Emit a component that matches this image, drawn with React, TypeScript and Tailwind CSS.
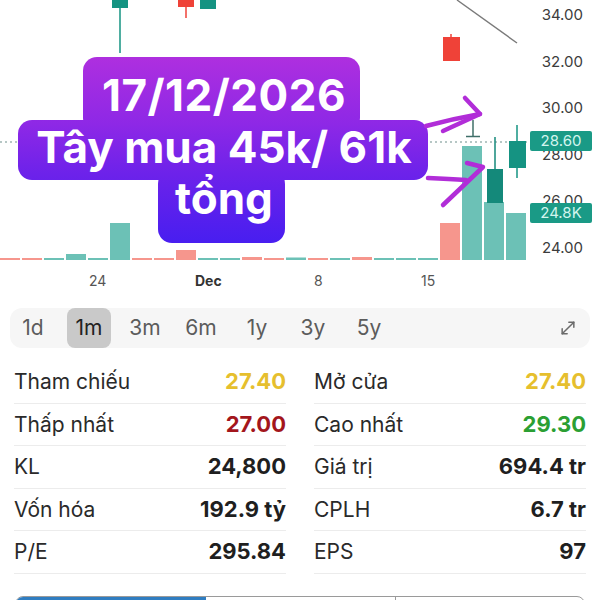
const vols: [string, number][] = [
  ["r", 2], ["r", 2], ["t", 2], ["t", 6], ["t", 2], ["t", 37], ["r", 2], ["r", 2],
  ["r", 10], ["t", 2], ["t", 2], ["r", 3], ["r", 2], ["t", 2.5], ["r", 2], ["t", 2],
  ["r", 3], ["t", 2], ["t", 2], ["t", 2], ["r", 37], ["t", 114], ["t", 58], ["t", 47],
];

const prices = ["34.00", "32.00", "30.00", "28.00", "26.00", "24.00"];
const ranges = ["1d", "1m", "3m", "6m", "1y", "3y", "5y"];

const stats = [
  ["Tham chiếu", "27.40", "text-[#e6bf2e]", "Mở cửa", "27.40", "text-[#e6bf2e]"],
  ["Thấp nhất", "27.00", "text-[#a3161c]", "Cao nhất", "29.30", "text-[#2b9f33]"],
  ["KL", "24,800", "text-[#1f1f1f]", "Giá trị", "694.4 tr", "text-[#1f1f1f]"],
  ["Vốn hóa", "192.9 tỷ", "text-[#1f1f1f]", "CPLH", "6.7 tr", "text-[#1f1f1f]"],
  ["P/E", "295.84", "text-[#1f1f1f]", "EPS", "97", "text-[#1f1f1f]"],
];

function PriceChart() {
  return (
    <svg width="530" height="265" className="block">
      {/* đường xu hướng */}
      <line x1="457" y1="0" x2="517" y2="43" stroke="#7a7a7a" strokeWidth="1.4" />
      {/* giá hiện tại */}
      <line x1="0" y1="142" x2="530" y2="142" stroke="#6f8f8b" strokeWidth="1.2" strokeDasharray="2 3" />

      {vols.map(([c, h], i) => (
        <rect
          key={i}
          x={i * 22}
          y={260 - h}
          width="20"
          height={h}
          fill={c === "r" ? "#f6968d" : "#6cc1b6"}
        />
      ))}

      {/* nến */}
      <line x1="120" y1="0" x2="120" y2="53" stroke="#159382" strokeWidth="1.5" />
      <rect x="112" y="-5" width="16" height="13" fill="#159382" />
      <line x1="186" y1="0" x2="186" y2="18" stroke="#ef4238" strokeWidth="1.5" />
      <rect x="178" y="-5" width="16" height="12" fill="#ef4238" />
      <rect x="200" y="-5" width="16" height="14" fill="#159382" />

      <line x1="451" y1="34" x2="451" y2="40" stroke="#ef4238" strokeWidth="1.5" />
      <rect x="443" y="37" width="17" height="24" fill="#ef4238" />

      <line x1="473" y1="120" x2="473" y2="136" stroke="#3f6f69" strokeWidth="1.5" />
      <line x1="466" y1="136.5" x2="480" y2="136.5" stroke="#3f6f69" strokeWidth="1.5" />

      <line x1="495" y1="137" x2="495" y2="170" stroke="#14897a" strokeWidth="1.5" />
      <rect x="487" y="169" width="16" height="34" fill="#14897a" />

      <line x1="517" y1="125" x2="517" y2="178" stroke="#159382" strokeWidth="1.5" />
      <rect x="509" y="141" width="17" height="27" fill="#159382" />
    </svg>
  );
}

function Sticker() {
  const grad =
    "bg-fixed bg-[linear-gradient(180deg,#ae2fdf_57px,#8d28e6_125px,#6c22ea_175px,#481ef0_243px)]";
  return (
    <div className="pointer-events-none absolute inset-0">
      <div className={`absolute left-[83px] top-[57px] h-[75px] w-[277px] rounded-[14px] ${grad}`} />
      <div className={`absolute left-[18px] top-[120px] h-[60px] w-[410px] rounded-[14px] ${grad}`} />
      <div className={`absolute left-[158px] top-[170px] h-[73px] w-[127px] rounded-[14px] ${grad}`} />
      <div className="absolute left-[22px] top-[70px] flex w-[404px] flex-col items-center text-[44px] font-bold leading-[51.5px] text-white">
        <span className="tracking-[0.5px]">17/12/2026</span>
        <span>Tây mua 45k/ 61k</span>
        <span>tổng</span>
      </div>
      <svg width="600" height="300" className="absolute left-0 top-0">
        <g fill="none" stroke="#b12dd8" strokeWidth="4.5" strokeLinecap="round" strokeLinejoin="round">
          <path d="M426 126 Q452 119 480 114" />
          <path d="M465 98 L480 114 L443 131" />
          <path d="M428 178 Q450 179 466 180" />
          <path d="M467 163 L483 167 L443 205" />
        </g>
      </svg>
    </div>
  );
}

export default function App() {
  return (
    <div className="h-[600px] w-[600px] overflow-hidden bg-white font-['Inter',sans-serif]">
      <section className="relative">
        <div className="flex h-[265px]">
          <PriceChart />
          <div className="relative h-[265px] w-[70px] pr-[17px] text-right text-[15px] text-[#3c3c3c]">
            <div className="-mt-[8px] flex flex-col">
              {prices.map((p) => (
                <span key={p} className="flex h-[46.6px] items-center justify-end">
                  {p}
                </span>
              ))}
            </div>
            <span className="absolute left-0 top-[131px] flex h-[20px] w-[62px] items-center justify-center rounded-[2px] bg-[#1a9a86] text-[15px] text-[#d3f5ee]">
              28.60
            </span>
            <span className="absolute left-0 top-[203px] flex h-[20px] w-[62px] items-center justify-center rounded-[2px] bg-[#1a9a86] text-[15px] text-[#d3f5ee]">
              24.8K
            </span>
          </div>
        </div>
        <div className="relative h-[30px] text-[14px] text-[#555]">
          <span className="absolute left-[89px] top-[5px]">24</span>
          <span className="absolute left-[195px] top-[5px] font-bold text-[#333]">Dec</span>
          <span className="absolute left-[314px] top-[5px]">8</span>
          <span className="absolute left-[421px] top-[5px]">15</span>
        </div>
        <Sticker />
      </section>

      <div className="mx-[10px] mt-[13px] flex h-[40px] items-center rounded-xl bg-[#f6f6f6] pl-[1px] pr-[12px]">
        <div className="flex gap-[12px]">
          {ranges.map((r) => (
            <span
              key={r}
              className={
                r === "1m"
                  ? "flex h-[40px] w-[44px] items-center justify-center rounded-lg bg-[#c9c9c9] text-[21px] text-[#222]"
                  : "flex h-[40px] w-[44px] items-center justify-center text-[21px] text-[#5c5c5c]"
              }
            >
              {r}
            </span>
          ))}
        </div>
        <svg
          className="ml-auto"
          width="20"
          height="20"
          viewBox="0 0 24 24"
          fill="none"
          stroke="#6b6b6b"
          strokeWidth="1.8"
          strokeLinecap="round"
          strokeLinejoin="round"
        >
          <polyline points="13 5 19 5 19 11" />
          <polyline points="11 19 5 19 5 13" />
          <line x1="19" y1="5" x2="5" y2="19" />
        </svg>
      </div>

      <div className="mt-[13px] grid grid-cols-2 gap-x-[28px] px-[14px]">
        {stats.map((s) => (
          <div key={s[0]} className="contents">
            <div className="flex h-[42.5px] items-center justify-between border-b border-[#ececec]">
              <span className="text-[21px] text-[#2a2a2a]">{s[0]}</span>
              <span className={`text-[22px] font-bold ${s[2]}`}>{s[1]}</span>
            </div>
            <div className="flex h-[42.5px] items-center justify-between border-b border-[#ececec]">
              <span className="text-[21px] text-[#2a2a2a]">{s[3]}</span>
              <span className={`text-[22px] font-bold ${s[5]}`}>{s[4]}</span>
            </div>
          </div>
        ))}
      </div>

      <div className="mx-[15px] mt-[22px] flex h-[30px] overflow-hidden rounded-t-lg border border-[#9a9a9a]">
        <div className="w-[190px] bg-[#2f7dc1]" />
        <div className="w-[190px] border-r border-[#9a9a9a]" />
        <div className="flex-1" />
      </div>
    </div>
  );
}
